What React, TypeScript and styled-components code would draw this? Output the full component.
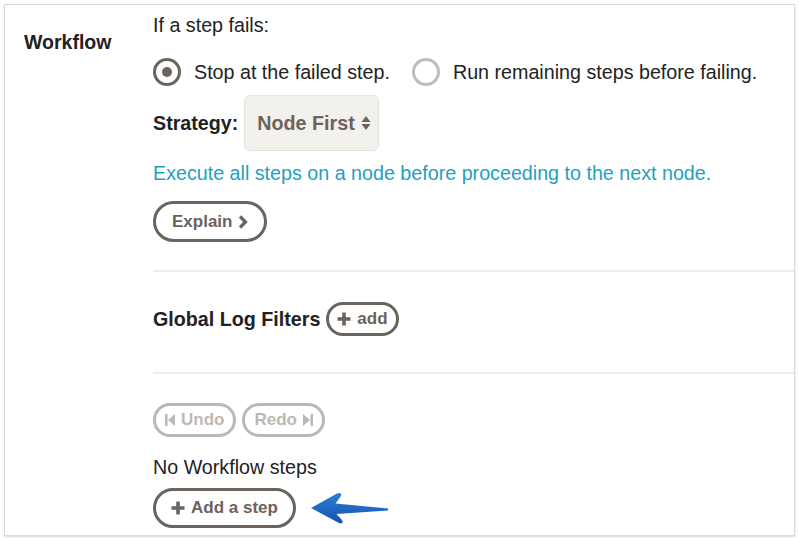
import styled, { createGlobalStyle } from "styled-components";

const GlobalStyle = createGlobalStyle`
    html, body {
        margin: 0;
        padding: 0;
        background: #ffffff;
    }
    body {
        font-family: "Liberation Sans", Arial, sans-serif;
        color: #222222;
    }
`;

const brown = "#6b635c";
const faded = "#bcb8b3";

export default function App(): JSX.Element {
    return (
        <>
            <GlobalStyle />
            <Page>
                <Card>
                    <Label>Workflow</Label>
                    <Content>
                        <Prompt>If a step fails:</Prompt>
                        <RadioGroup>
                            <RadioOption>
                                <Radio checked />
                                <span>Stop at the failed step.</span>
                            </RadioOption>
                            <RadioOption>
                                <Radio />
                                <span>Run remaining steps before failing.</span>
                            </RadioOption>
                        </RadioGroup>
                        <StrategyRow>
                            <StrongText>Strategy:</StrongText>
                            <Select>
                                <span>Node First</span>
                                <svg width="10" height="16" viewBox="0 0 10 16">
                                    <path d="M5 1 L9.5 7 H0.5 Z" fill={brown} />
                                    <path d="M5 15 L9.5 9 H0.5 Z" fill={brown} />
                                </svg>
                            </Select>
                        </StrategyRow>
                        <Hint>Execute all steps on a node before proceeding to the next node.</Hint>
                        <PillButton height={41} pad={16} style={{ marginTop: 17 }}>
                            Explain
                            <svg width="10" height="14" viewBox="0 0 10 14">
                                <path d="M2 1.5 L7.5 7 L2 12.5" fill="none" stroke={brown} strokeWidth="3.2" />
                            </svg>
                        </PillButton>
                        <Divider style={{ marginTop: 28 }} />
                        <FilterRow>
                            <StrongText>Global Log Filters</StrongText>
                            <PillButton height={34} pad={8}>
                                <PlusIcon />
                                add
                            </PillButton>
                        </FilterRow>
                        <Divider style={{ marginTop: 36 }} />
                        <HistoryRow>
                            <PillButton height={34} pad={9} disabled>
                                <svg width="10" height="12" viewBox="0 0 10 12">
                                    <rect x="0" y="0" width="2.5" height="12" fill={faded} />
                                    <path d="M10 0 V12 L3 6 Z" fill={faded} />
                                </svg>
                                Undo
                            </PillButton>
                            <PillButton height={34} pad={9} disabled>
                                Redo
                                <svg width="10" height="12" viewBox="0 0 10 12">
                                    <path d="M0 0 V12 L7 6 Z" fill={faded} />
                                    <rect x="7.5" y="0" width="2.5" height="12" fill={faded} />
                                </svg>
                            </PillButton>
                        </HistoryRow>
                        <Plain>No Workflow steps</Plain>
                        <AddRow>
                            <PillButton height={40} pad={15}>
                                <PlusIcon />
                                Add a step
                            </PillButton>
                            <Pointer />
                        </AddRow>
                    </Content>
                </Card>
            </Page>
        </>
    );
}

function PlusIcon({ color = brown }: { color?: string }): JSX.Element {
    return (
        <svg width="14" height="14" viewBox="0 0 14 14">
            <path d="M7 0.5 V13.5 M0.5 7 H13.5" stroke={color} strokeWidth="3.6" />
        </svg>
    );
}

function Pointer(): JSX.Element {
    return (
        <svg width="82" height="38" viewBox="0 0 82 38">
            <defs>
                <linearGradient id="arrowBlue" x1="0" y1="0" x2="0" y2="1">
                    <stop offset="0" stopColor="#2b7fd8" />
                    <stop offset="1" stopColor="#1652b0" />
                </linearGradient>
            </defs>
            <path
                d="M3 19 L29 4.5 Q34 2.5 33 7 L27.5 14.5 L80 19.6 L80 21.4 L28.5 25 L34 31 Q36 35.5 31 34 Z"
                fill="url(#arrowBlue)"
            />
        </svg>
    );
}

const Page = styled.div`
    padding: 4px 4px 4px 4px;
`;

const Card = styled.div`
    display: grid;
    grid-template-columns: 129px 1fr;
    padding: 0 0 7px 19px;
    border: 1px solid #d9d9d9;
    box-shadow: 0 1px 2px rgba(0, 0, 0, 0.15);
    background: #ffffff;
`;

const Label = styled.div`
    padding-top: 26px;
    font-size: 19.5px;
    line-height: 22px;
    font-weight: bold;
    color: #222222;
`;

const Content = styled.div`
    display: flex;
    flex-direction: column;
    align-items: flex-start;
    padding-top: 9px;
    font-size: 19.7px;
    line-height: 22px;
`;

const Prompt = styled.div`
    color: #222222;
`;

const RadioGroup = styled.div`
    display: flex;
    align-items: center;
    gap: 22px;
    margin-top: 22px;
`;

const RadioOption = styled.label`
    display: flex;
    align-items: center;
    gap: 13px;
    color: #222222;
`;

const Radio = styled.span<{ checked?: boolean }>`
    position: relative;
    box-sizing: border-box;
    width: 28px;
    height: 28px;
    border-radius: 50%;
    border: 3px solid ${(p) => (p.checked ? brown : "#c0bcb8")};
    display: flex;
    align-items: center;
    justify-content: center;

    &::after {
        content: "";
        display: ${(p) => (p.checked ? "block" : "none")};
        width: 10px;
        height: 10px;
        border-radius: 50%;
        background: ${brown};
    }
`;

const StrategyRow = styled.div`
    display: flex;
    align-items: center;
    gap: 6px;
    margin-top: 9px;
`;

const StrongText = styled.span`
    font-weight: bold;
    color: #222222;
`;

const Select = styled.div`
    box-sizing: border-box;
    width: 135px;
    height: 56px;
    display: flex;
    align-items: center;
    justify-content: space-between;
    padding: 0 7px 0 12px;
    background: #f3f1ec;
    border: 1px solid #e6e3dc;
    border-radius: 6px;
    font-weight: bold;
    color: ${brown};
`;

const Hint = styled.div`
    margin-top: 11px;
    color: #1ea1bf;
`;

const PillButton = styled.button<{ height: number; pad: number }>`
    box-sizing: border-box;
    height: ${(p) => p.height}px;
    display: inline-flex;
    align-items: center;
    gap: 6px;
    padding: 0 ${(p) => p.pad}px;
    border: 3px solid ${(p) => (p.disabled ? faded : brown)};
    border-radius: 999px;
    background: #ffffff;
    font-family: "Liberation Sans", Arial, sans-serif;
    font-size: 17px;
    font-weight: bold;
    color: ${(p) => (p.disabled ? faded : brown)};
    cursor: ${(p) => (p.disabled ? "default" : "pointer")};
`;

const Divider = styled.div`
    align-self: stretch;
    height: 2px;
    background: #f1ede5;
`;

const FilterRow = styled.div`
    display: flex;
    align-items: center;
    gap: 6px;
    margin-top: 30px;
`;

const HistoryRow = styled.div`
    display: flex;
    gap: 6px;
    margin-top: 29px;
`;

const Plain = styled.div`
    margin-top: 19px;
    color: #222222;
`;

const AddRow = styled.div`
    display: flex;
    align-items: center;
    gap: 12px;
    margin-top: 10px;
`;
